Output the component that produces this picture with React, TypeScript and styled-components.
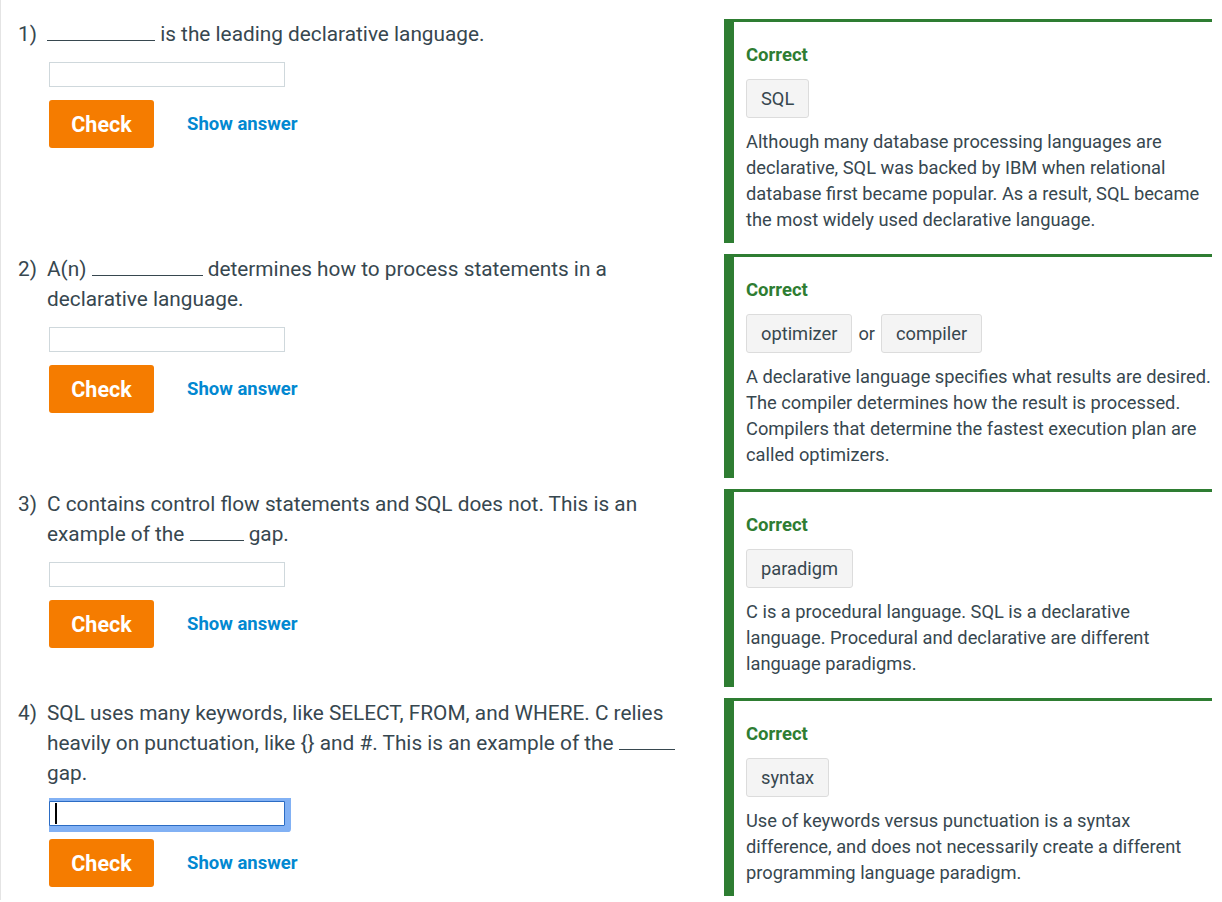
import React from "react";
import styled, { createGlobalStyle, css } from "styled-components";

const GlobalStyle = createGlobalStyle`
  html, body {
    margin: 0;
    padding: 0;
    background: #ffffff;
  }
  body {
    font-family: Roboto, "Liberation Sans", Arial, sans-serif;
    color: #37474f;
  }
`;

const Page = styled.div`
  border-left: 1px solid #e4e4e4;
  padding: 19px 10px 4px 17px;
  display: flex;
  flex-direction: column;
  gap: 11px;
  min-height: 879px;
  box-sizing: border-box;
`;

const Row = styled.section`
  display: grid;
  grid-template-columns: 686px 488px;
  column-gap: 20px;
  align-items: start;
`;

const Question = styled.div`
  display: grid;
  grid-template-columns: 29px 1fr;
`;

const Number = styled.div`
  font-size: 20.8px;
  line-height: 30px;
`;

const Body = styled.div`
  display: flex;
  flex-direction: column;
  align-items: flex-start;
`;

const Prompt = styled.p`
  margin: 0;
  font-size: 20.8px;
  line-height: 30px;
  max-width: 650px;
`;

const Blank = styled.span<{ $w: number }>`
  display: inline-block;
  width: ${(p) => p.$w}px;
  height: 0;
  border-bottom: 1px solid #37474f;
  vertical-align: baseline;
`;

const InputWrap = styled.div`
  position: relative;
  margin: 13px 0 0 2px;
`;

const Input = styled.input<{ $focused?: boolean }>`
  display: block;
  width: 236px;
  height: 25px;
  box-sizing: border-box;
  border: 1px solid #cfd8dc;
  border-radius: 0;
  padding: 0 6px;
  font-family: inherit;
  font-size: 16px;
  outline: none;
  background: #fff;
  ${(p) =>
    p.$focused &&
    css`
      border-color: #2b6cc4;
      box-shadow: 3px 0 0 3px #82b1f4, 3px 3px 0 3px #82b1f4;
      border-bottom-right-radius: 1px;
    `}
`;

const Caret = styled.span`
  position: absolute;
  left: 6px;
  top: 2px;
  width: 2px;
  height: 21px;
  background: #000;
`;

const Actions = styled.div`
  display: flex;
  align-items: center;
  gap: 33px;
  margin: 13px 0 0 2px;
`;

const CheckButton = styled.button`
  width: 105px;
  height: 48px;
  border: none;
  border-radius: 3px;
  background: #f57c00;
  color: #ffffff;
  font-family: Roboto, "Liberation Sans", Arial, sans-serif;
  font-weight: 700;
  font-size: 21.5px;
  cursor: pointer;
  padding: 0;
`;

const ShowAnswer = styled.button`
  border: none;
  background: none;
  padding: 0;
  color: #0288d1;
  font-family: Roboto, "Liberation Sans", Arial, sans-serif;
  font-weight: 700;
  font-size: 18.5px;
  cursor: pointer;
`;

const Feedback = styled.div`
  border-left: 10px solid #2e7d32;
  border-top: 3px solid #2e7d32;
  padding: 20px 0 10px 12px;
`;

const Status = styled.div`
  color: #2e7d32;
  font-weight: 700;
  font-size: 18.5px;
  line-height: 26px;
`;

const Answers = styled.div`
  display: flex;
  align-items: center;
  gap: 6px;
  margin-top: 11px;
  font-size: 18.3px;
`;

const Chip = styled.span`
  display: inline-flex;
  align-items: center;
  height: 39px;
  box-sizing: border-box;
  padding: 0 14px;
  background: #f4f4f4;
  border: 1px solid #dcdcdc;
  border-radius: 3px;
  font-size: 18.3px;
  color: #37474f;
`;

const Or = styled.span`
  font-size: 18.3px;
`;

const Explanation = styled.p`
  margin: 11px 0 0;
  font-size: 18.3px;
  line-height: 26px;
`;

type Item = {
  prompt: React.ReactNode;
  answers: string[];
  explanation: string;
  focused?: boolean;
};

const items: Item[] = [
  {
    prompt: (
      <>
        <Blank $w={108} /> is the leading declarative language.
      </>
    ),
    answers: ["SQL"],
    explanation:
      "Although many database processing languages are declarative, SQL was backed by IBM when relational database first became popular. As a result, SQL became the most widely used declarative language.",
  },
  {
    prompt: (
      <>
        A(n) <Blank $w={111} /> determines how to process statements in a declarative language.
      </>
    ),
    answers: ["optimizer", "compiler"],
    explanation:
      "A declarative language specifies what results are desired. The compiler determines how the result is processed. Compilers that determine the fastest execution plan are called optimizers.",
  },
  {
    prompt: (
      <>
        C contains control flow statements and SQL does not. This is an example of the <Blank $w={54} /> gap.
      </>
    ),
    answers: ["paradigm"],
    explanation:
      "C is a procedural language. SQL is a declarative language. Procedural and declarative are different language paradigms.",
  },
  {
    prompt: (
      <>
        SQL uses many keywords, like SELECT, FROM, and WHERE. C relies heavily on punctuation, like {"{}"} and #. This is an example of the <Blank $w={56} /> gap.
      </>
    ),
    answers: ["syntax"],
    explanation:
      "Use of keywords versus punctuation is a syntax difference, and does not necessarily create a different programming language paradigm.",
    focused: true,
  },
];

export default function App() {
  return (
    <>
      <GlobalStyle />
      <Page>
        {items.map((item, i) => (
          <Row key={i}>
            <Question>
              <Number>{i + 1})</Number>
              <Body>
                <Prompt>{item.prompt}</Prompt>
                <InputWrap>
                  <Input $focused={item.focused} type="text" aria-label={`Answer ${i + 1}`} />
                  {item.focused && <Caret />}
                </InputWrap>
                <Actions>
                  <CheckButton>Check</CheckButton>
                  <ShowAnswer>Show answer</ShowAnswer>
                </Actions>
              </Body>
            </Question>
            <Feedback>
              <Status>Correct</Status>
              <Answers>
                {item.answers.map((a, j) => (
                  <React.Fragment key={a}>
                    {j > 0 && <Or>or</Or>}
                    <Chip>{a}</Chip>
                  </React.Fragment>
                ))}
              </Answers>
              <Explanation>{item.explanation}</Explanation>
            </Feedback>
          </Row>
        ))}
      </Page>
    </>
  );
}
